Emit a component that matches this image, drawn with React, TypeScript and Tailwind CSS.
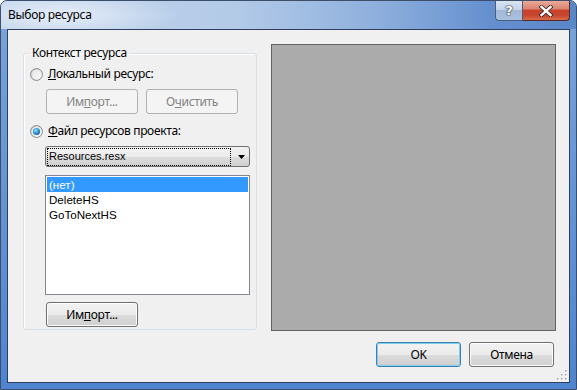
import React from "react";

const ui = "font-['Noto_Sans',sans-serif] text-[12px] leading-[16px] tracking-[-0.35px]";
const ms = "font-['Liberation_Sans',Arial,sans-serif] text-[11px]";
const ls = "font-['Liberation_Sans',Arial,sans-serif] text-[11.6px]";

function Radio({ checked }: { checked?: boolean }) {
  return (
    <div className="w-[13px] h-[13px] rounded-full border border-[#8b8e92] bg-[linear-gradient(135deg,#c7c9cc,#f4f4f4)] flex items-center justify-center shrink-0">
      <div className="w-[9px] h-[9px] rounded-full bg-[linear-gradient(135deg,#e4e5e6,#fbfbfb)] flex items-center justify-center">
        {checked && (
          <div className="w-[7px] h-[7px] rounded-full bg-[radial-gradient(circle_at_40%_35%,#a8e2ff_0%,#3ea3dd_35%,#0f5a99_80%,#1b4c7a_100%)]" />
        )}
      </div>
    </div>
  );
}

function Btn({
  children,
  disabled,
  def,
  w,
}: {
  children: React.ReactNode;
  disabled?: boolean;
  def?: boolean;
  w: string;
}) {
  const base = `${w} h-[25px] rounded-[3px] border flex items-center justify-center ${ui}`;
  if (disabled)
    return (
      <div className={`${base} border-[#adb2b5] bg-[#f4f4f4] text-[#838383]`}>{children}</div>
    );
  if (def)
    return (
      <div className={`${base} border-[#3c7fb1] text-black`}>
        <div className="w-full h-full rounded-[2px] flex items-center justify-center bg-[linear-gradient(to_bottom,#f2f2f2_0%,#ebebeb_50%,#dddddd_51%,#cfcfcf_100%)] border border-[#7dcff2]">
          {children}
        </div>
      </div>
    );
  return (
    <div
      className={`${base} border-[#707070] bg-[linear-gradient(to_bottom,#f2f2f2_0%,#ebebeb_50%,#dddddd_51%,#cfcfcf_100%)] shadow-[inset_0_0_0_1px_#fcfcfc] text-black`}
    >
      {children}
    </div>
  );
}

export default function App() {
  return (
    <div className="w-[577px] h-[390px] flex flex-col rounded-t-[7px] border border-[#3b4f6b] bg-[linear-gradient(to_bottom,#7aa4da,#5d8ed2_70%,#4f84cf)] overflow-hidden">
      {/* title bar */}
      <div className="h-[28px] flex items-start bg-[radial-gradient(ellipse_120px_26px_at_60px_14px,rgba(235,242,250,0.9),rgba(235,242,250,0)_100%),linear-gradient(to_right,#bed1ea_0%,#b4cbe8_40%,#8fb0dd_65%,#6590cf_85%,#5a87c9_100%)]">
        <div className="pl-[7px] pt-[6px] font-['Noto_Sans',sans-serif] text-[12px] tracking-[-0.3px] leading-[16px] text-black">
          Выбор ресурса
        </div>
        <div className="ml-auto mr-[6px] flex">
          <div className="w-[28px] h-[20px] rounded-bl-[4px] border border-t-0 border-[#4a5f80] bg-[linear-gradient(to_bottom,#dbe5f2_0%,#c3d3e8_45%,#a3b8d6_50%,#a9c0de_100%)] flex items-center justify-center">
            <span className="font-['DejaVu_Sans',sans-serif] font-bold text-[13px] leading-none text-white [text-shadow:0_0_1px_#2a3a55,0_0_1px_#2a3a55,0_0_2px_#2a3a55]">
              ?
            </span>
          </div>
          <div className="w-[47px] h-[20px] rounded-br-[4px] border border-t-0 border-l-0 border-[#5a2a22] bg-[linear-gradient(to_bottom,#e9a99a_0%,#dc8572_40%,#c7432b_50%,#c8452d_75%,#d96b4c_100%)] flex items-center justify-center">
            <svg width="14" height="12" viewBox="0 0 14 12">
              <path d="M2.5 2 L11.5 10 M11.5 2 L2.5 10" stroke="#3c2420" strokeWidth="4.2" strokeLinecap="square" />
              <path d="M2.5 2 L11.5 10 M11.5 2 L2.5 10" stroke="#ffffff" strokeWidth="2.4" strokeLinecap="square" />
            </svg>
          </div>
        </div>
      </div>

      {/* client */}
      <div className="relative flex-1 mx-[6px] mb-[6px] border border-[#2d3f5c] bg-[#f0f0f0] flex flex-col">
        <div className="flex items-start">
          <fieldset className="ml-[15px] mt-[15px] w-[234px] rounded-[3px] border border-[#d5dfe5] shadow-[inset_1px_1px_0_#ffffff] pb-[2px]">
            <legend className={`ml-[6px] px-[2px] ${ui} text-black`}>Контекст ресурса</legend>
            <div className="flex items-center mt-[5px] h-[16px] pl-[6px]">
              <Radio />
              <span className={`ml-[5px] ${ui} text-black`}>
                <span className="underline">Л</span>окальный ресурс:
              </span>
            </div>
            <div className="flex mt-[7px] pl-[22px] gap-[8px]">
              <Btn disabled w="w-[92px]">
                <span>
                  Им<span className="underline">п</span>орт...
                </span>
              </Btn>
              <Btn disabled w="w-[92px]">
                <span>
                  О<span className="underline">ч</span>истить
                </span>
              </Btn>
            </div>
            <div className="flex items-center mt-[9px] h-[16px] pl-[6px]">
              <Radio checked />
              <span className={`ml-[5px] ${ui} text-black`}>
                <span className="underline">Ф</span>айл ресурсов проекта:
              </span>
            </div>
            <div className="ml-[21px] mt-[7px] w-[205px] h-[21px] rounded-[3px] border border-[#707070] bg-[linear-gradient(to_bottom,#f2f2f2_0%,#ebebeb_50%,#dddddd_51%,#cfcfcf_100%)] flex items-center">
              <div className={`ml-[1px] w-[184px] h-[18px] border border-dotted border-black flex items-center pl-[1px] ${ms} text-black`}>
                Resources.resx
              </div>
              <svg className="ml-[7px]" width="7" height="4" viewBox="0 0 7 4">
                <path d="M0 0 H7 L3.5 4 Z" fill="#000" />
              </svg>
            </div>
            <div className="ml-[21px] mt-[8px] w-[205px] h-[120px] border border-[#828790] bg-white p-[1px]">
              <div className={`h-[15px] bg-[#3399ff] text-white pl-[2px] flex items-center ${ls}`}>(нет)</div>
              <div className={`h-[15px] text-black pl-[2px] flex items-center ${ls}`}>DeleteHS</div>
              <div className={`h-[15px] text-black pl-[2px] flex items-center ${ls}`}>GoToNextHS</div>
            </div>
            <div className="ml-[22px] mt-[7px]">
              <Btn w="w-[92px]">
                <span>
                  Им<span className="underline">п</span>орт...
                </span>
              </Btn>
            </div>
          </fieldset>
          <div className="ml-[14px] mt-[14px] w-[285px] h-[287px] border border-[#646464] bg-[#ababab]" />
        </div>
        <div className="flex justify-end gap-[8px] pr-[15px] mt-[11px]">
          <Btn def w="w-[85px]">
            OK
          </Btn>
          <Btn w="w-[85px]">Отмена</Btn>
        </div>
        <svg className="absolute right-[1px] bottom-[1px]" width="11" height="11" viewBox="0 0 11 11">
          {[
            [9, 1],
            [9, 5],
            [5, 5],
            [9, 9],
            [5, 9],
            [1, 9],
          ].map(([x, y], i) => (
            <g key={i}>
              <rect x={x} y={y} width="1.5" height="1.5" fill="#ffffff" />
              <rect x={x - 1} y={y - 1} width="1.5" height="1.5" fill="#a0a0a0" />
            </g>
          ))}
        </svg>
      </div>
    </div>
  );
}
